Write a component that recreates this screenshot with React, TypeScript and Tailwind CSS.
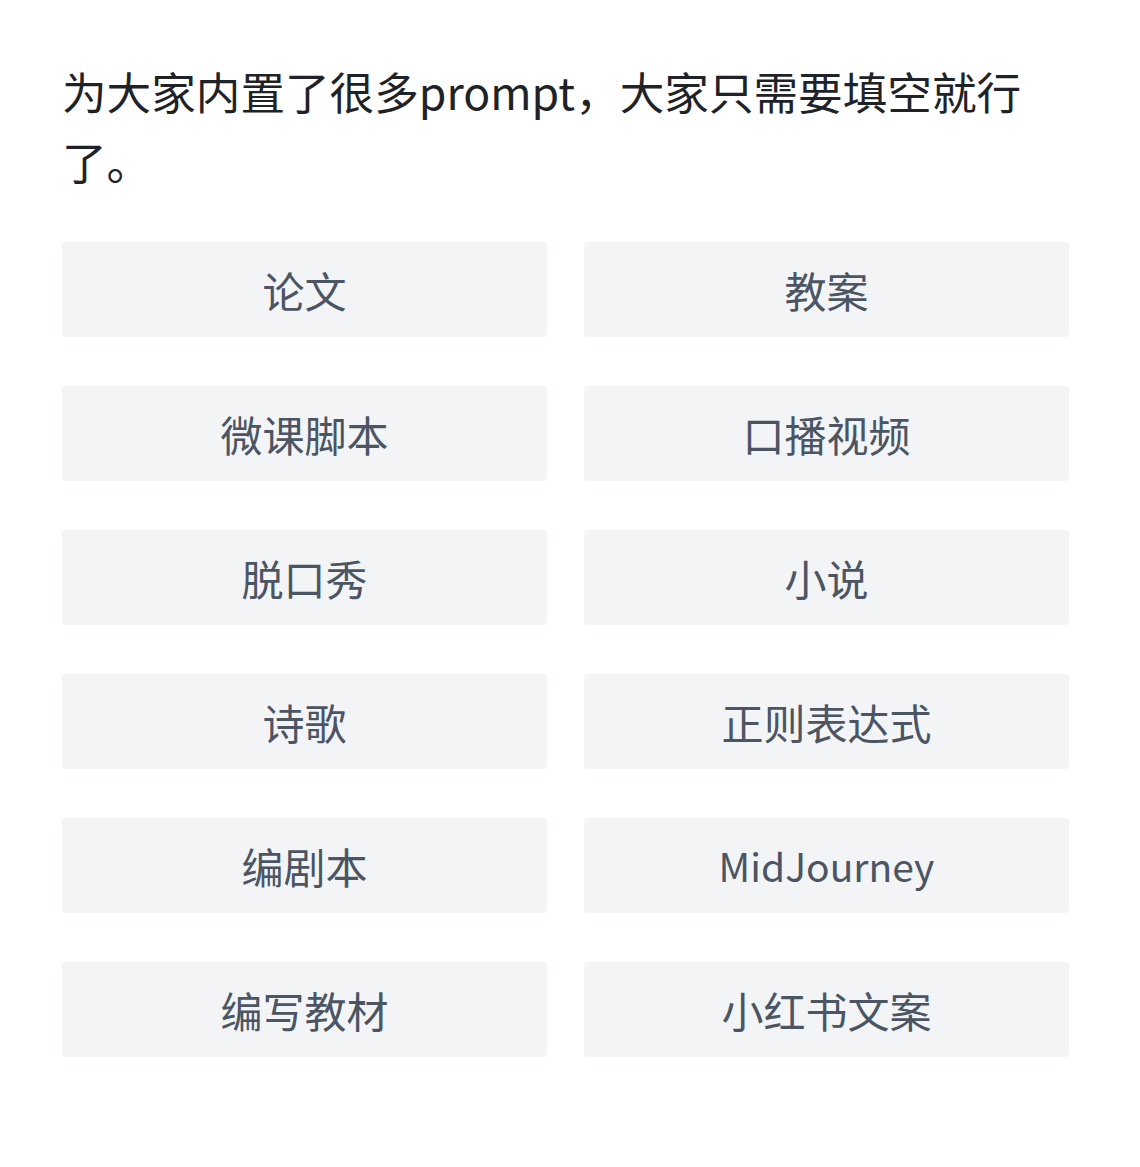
const prompts = [
  "论文",
  "教案",
  "微课脚本",
  "口播视频",
  "脱口秀",
  "小说",
  "诗歌",
  "正则表达式",
  "编剧本",
  "MidJourney",
  "编写教材",
  "小红书文案",
];

export default function App() {
  return (
    <div
      className="min-h-screen bg-white px-[62px] pt-[56px]"
      style={{ fontFamily: '"Noto Sans CJK SC", "Noto Sans", sans-serif' }}
    >
      <h1 className="w-[1007px] text-[44.6px] leading-[70px] text-[#1f2328] font-normal">
        为大家内置了很多prompt，大家只需要填空就行了。
      </h1>

      <div className="mt-[46px] grid w-[1007px] grid-cols-2 gap-x-[37px] gap-y-[49px]">
        {prompts.map((p) => (
          <button
            key={p}
            className={`h-[95px] rounded bg-[#f3f4f6] text-[#4b5563] ${
              p === "MidJourney" ? "text-[39px]" : "text-[42px]"
            }`}
          >
            {p}
          </button>
        ))}
      </div>
    </div>
  );
}
